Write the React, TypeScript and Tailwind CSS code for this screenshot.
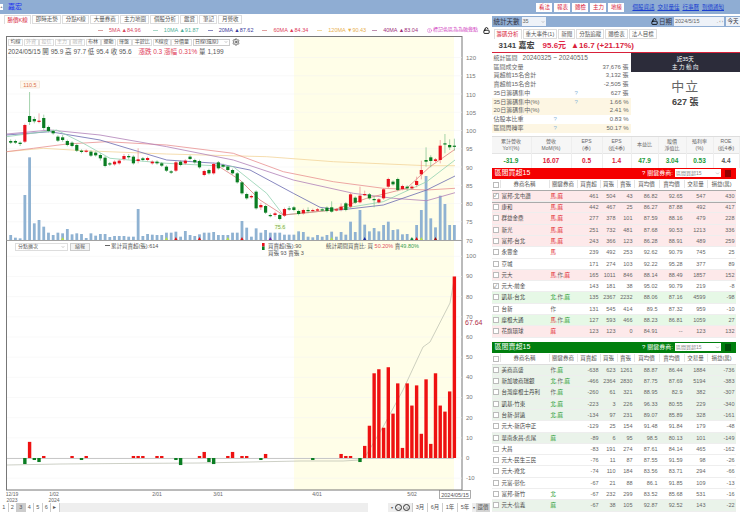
import { ChevronDown, Info, LockOpen, Minus, Plus, Settings } from "lucide-react";

const leftTabs = ["勝價K線", "即時走勢", "分點K線", "大量券商", "主力地圖", "個股分析", "鑑賞", "筆記", "月營收"];
const rightTabs = ["籌碼分析", "重大事件(1)", "新聞", "分點追蹤", "體檢表", "法人目標"];
const topButtons = ["看法", "報表", "體檢", "主力", "地緣"];
const topLinks = ["個股資訊", "交易量佳", "行事曆", "到價通知"];

const legend = [
	{ label: "5MA ▲84.96", text: "text-[#d9485f]", line: "bg-[#d9a0a0]" },
	{ label: "10MA ▲91.87", text: "text-[#4fb09a]", line: "bg-[#a8d8c8]" },
	{ label: "20MA ▲87.62", text: "text-[#3c3c9c]", line: "bg-[#8888c0]" },
	{ label: "60MA ▲84.34", text: "text-[#e0405a]", line: "bg-[#e0a0a0]" },
	{ label: "120MA ▼90.43", text: "text-[#e8b050]", line: "bg-[#f0d8a0]" },
	{ label: "40MA ▲83.04", text: "text-[#a0307a]", line: "bg-[#c090b0]" },
];

// top, bottom, colour, optional wick top/bottom (units: 3x crop of y=130)
type Candle = [number, number, "r" | "g", number?, number?];
const candles: Candle[] = [
	[33, 38, "g", 28, 42], [33, 38, "g"], [38, 42, "g", 34, 48], [-15, 35, "r"], [-42, -24, "g", -114, -15],
	[-33, -26, "g", -40, -20], [-28, -24, "r", -50, -20], [-36, -6, "g", -46, 0], [-9, 3, "g"], [3, 10, "g"],
	[20, 32, "g"], [22, 30, "g", 15, 35], [33, 45, "g"], [38, 48, "g"], [45, 62, "g"], [62, 66, "g"], [62, 64, "r"], [65, 77, "g"], [68, 76, "g"], [75, 85, "g", 70, 92],
	[83, 108, "g", 78, 112], [100, 103, "g", 96, 108], [95, 103, "r"], [92, 100, "r"], [78, 87, "r", 72, 92], [78, 82, "g", 72, 88], [80, 100, "g"], [88, 93, "r", 55, 100], [85, 90, "g"], [84, 90, "r"],
	[95, 100, "r"], [95, 100, "g"], [100, 107, "g"], [110, 122, "g"], [124, 128, "g"], [97, 122, "r"], [95, 105, "g"], [92, 100, "r"], [80, 87, "g"], [90, 97, "g"],
	[93, 112, "g"], [123, 135, "r"], [120, 130, "g"], [102, 130, "r"], [97, 115, "g"], [105, 110, "g"], [110, 120, "g"], [120, 130, "g"], [130, 157, "g"], [157, 190, "g"],
	[192, 205, "g"], [198, 202, "r"], [185, 235, "g"], [225, 232, "r", 218, 240], [228, 248, "g"], [255, 258, "g", 250, 262], [250, 255, "r", 245, 260], [255, 267, "g"], [237, 257, "r"], [235, 237, "g", 228, 242],
	[232, 240, "g"], [243, 252, "g"], [240, 250, "r"], [240, 243, "g", 232, 250], [240, 243, "r"], [238, 242, "r"], [238, 240, "g"], [233, 243, "g"], [232, 245, "g", 214, 248], [238, 240, "r"],
	[230, 240, "r", 220, 244], [220, 240, "g"], [193, 230, "r"], [203, 218, "g"], [197, 217, "r", 170, 220], [192, 195, "r", 182, 198], [193, 205, "g"], [207, 210, "g", 198, 232], [208, 217, "r"], [178, 205, "r"],
	[147, 170, "r"], [155, 163, "g"], [147, 180, "g"], [168, 177, "r"], [170, 175, "g", 166, 182], [170, 175, "r"], [153, 165, "r", 140, 172], [120, 133, "r", 92, 148], [90, 95, "g", 52, 110], [82, 93, "g", 76, 112],
	[88, 93, "r"], [47, 90, "r", 30, 100], [40, 43, "g", 12, 70], [45, 52, "g", 28, 60], [47, 50, "g", 26, 62],
];

const volumes = [
	15, 7, 5, 135, 248, 50, 60, 40, 22, 15, 22, 20, 33, 17, 20, 18, 6, 20, 13, 18, 18, 9, 12, 12, 12, 10, 10, 93, 12, 18, 16, 15, 15, 22, 22, 25, 10, 27, 15, 12,
	17, 22, 22, 24, 15, 15, 15, 22, 22, 57, 37, 10, 35, 22, 30, 22, 22, 22, 16, 16, 16, 26, 24, 10, 8, 15, 10, 15, 25, 10, 24, 16, 55, 24, 90, 46, 26, 36, 26, 45,
	55, 30, 32, 17, 18, 5, 45, 90, 192, 65, 38, 133, 108, 45, 45,
];

const volMarks: [number, string][] = [
	[11, "#b8e04a"], [33, "#b8e04a"], [35, "#e01010"], [40, "#e01010"], [46, "#b8e04a"], [49, "#e01010"], [55, "#6a1fa0"], [68, "#b8e04a"], [75, "#1a2fa0"], [85, "#0a8a3a"], [86, "#e01010"], [87, "#b8e04a"], [90, "#a01010"],
];

const netBars: Record<number, number> = {
	3: -3, 4: 8, 5: -1, 6: -2, 7: 1, 13: 1, 15: -1, 16: 1, 26: 1, 27: 1, 28: 1, 31: 1, 32: 1, 35: -1, 36: -3.5, 40: 1, 41: 3, 42: -2, 43: -3, 46: 1, 47: 3, 49: 1, 50: 1, 53: -1, 54: 2, 64: -1, 70: 2, 71: 1, 72: 1, 74: -2,
	75: 6, 76: 16, 77: 42, 78: 44, 79: 15, 80: 45, 81: 22, 82: 37, 83: 5, 84: 37, 85: 26, 86: 36, 87: 12, 88: 39, 89: 7, 90: 42, 91: 26, 92: 23, 93: 33, 94: 90,
};

const maLines = [
	{ color: "#f3d49a", pts: "20,65 130,55 250,62 500,72 800,80 1000,95 1280,107 1365,107" },
	{ color: "#e89090", pts: "20,65 100,55 200,42 320,35 500,45 700,70 850,125 1000,155 1150,175 1280,180 1365,175" },
	{ color: "#b080b8", pts: "20,12 150,0 300,15 500,50 700,90 880,150 1060,190 1180,205 1280,212 1365,188" },
	{ color: "#6a6ab0", pts: "20,15 150,5 300,30 500,90 650,100 750,120 880,190 960,232 1020,240 1150,225 1280,180 1365,138" },
	{ color: "#90d0b0", pts: "20,20 170,0 250,40 330,85 500,100 700,110 800,190 850,255 1000,240 1150,215 1280,155 1365,90" },
	{ color: "#e08080", pts: "650,105 720,150 780,210 850,255 1000,240 1100,205 1220,175 1290,110 1365,58" },
];

const xAt = (i: number) => 10.7 + 4.72 * i;
const zy = (z: number) => 130 + z / 3;
const linePts = (pts: string) =>
	pts
		.split(" ")
		.map((p) => {
			const [x, y] = p.split(",").map(Number);
			return `${(x / 3).toFixed(1)},${zy(y).toFixed(1)}`;
		})
		.join(" ");
const netY = (v: number) => 458 - v * 2.017;

const stats = [
	{ name: "統計區間", span: "20240325 ~ 20240515" },
	{ name: "區間成交量", value: "37,676 張" },
	{ name: "買超前15名合計", value: "3,132 張" },
	{ name: "賣超前15名合計", value: "-2,505 張" },
	{ name: "35日籌碼集中", value: "627 張", q: "w-[81px]" },
	{ name: "35日籌碼集中(%)", value: "1.66 %", q: "w-[81px]", hi: true },
	{ name: "20日籌碼集中(%)", value: "2.41 %", hi: true },
	{ name: "佔股本比重", value: "0.83 %", q: "w-[60px]" },
	{ name: "區間周轉率", value: "50.17 %", q: "w-[60px]", hi: true },
];

const metrics = [
	{ head: ["累計營收", "YoY(%)"], value: "-31.9", color: "text-[#1a9a3a]", w: "w-[40px]" },
	{ head: ["營收", "MoM(%)"], value: "16.07", color: "text-[#d8213a]", w: "w-[40px]" },
	{ head: ["EPS", "(季)"], value: "0.5", color: "text-[#d8213a]", w: "w-[31px]" },
	{ head: ["EPS", "(近4季)"], value: "1.4", color: "text-[#d8213a]", w: "w-[29px]" },
	{ head: ["本益比"], value: "47.9", color: "text-[#1a9a3a]", w: "w-[27px]" },
	{ head: ["股價", "淨值比"], value: "3.04", color: "text-[#1a9a3a]", w: "w-[28px]" },
	{ head: ["殖利率", "(%)"], value: "0.53", color: "text-[#1a9a3a]", w: "w-[27px]" },
	{ head: ["ROE", "(近4季)"], value: "4.4", color: "text-[#555]", w: "w-[26px]" },
];

const headers = ["券商名稱", "關鍵券商", "買賣超", "買張", "賣張", "買均價", "賣均價", "交易量", "損益(萬)"];

type Row = { tint: string; tag: string; tagColor: string; cells: (string | number)[]; checked?: boolean; focus?: boolean };

const pink = "bg-[#fde9ea]";
const mint = "bg-[#e6f8e6]";
const sage = "bg-[#eaf3ea]";
const plain = "bg-white";
const red = "text-[#e01a1a]";
const green = "text-[#1a9a2a]";

const buyRows: Row[] = [
	{ tint: pink, tag: "馬,麻", tagColor: red, checked: true, focus: true, cells: ["富邦-北屯讚", 461, 504, 43, 86.82, 92.65, 547, 430] },
	{ tint: pink, tag: "馬,麻", tagColor: red, cells: ["康和", 442, 467, 25, 86.27, 87.88, 492, 417] },
	{ tint: pink, tag: "馬,麻", tagColor: red, cells: ["群益金鼎", 277, 378, 101, 87.59, 88.16, 479, 228] },
	{ tint: pink, tag: "馬,麻", tagColor: red, cells: ["新光", 251, 732, 481, 87.68, 90.53, 1213, 336] },
	{ tint: pink, tag: "馬,麻", tagColor: red, cells: ["富邦-台北", 243, 366, 123, 86.28, 88.91, 489, 259] },
	{ tint: plain, tag: "馬", tagColor: red, cells: ["永豐金", 239, 492, 253, 92.62, 90.79, 745, 25] },
	{ tint: plain, tag: "", tagColor: red, cells: ["京城", 171, 274, 103, 92.22, 95.28, 377, 89] },
	{ tint: pink, tag: "馬,作,麻", tagColor: red, cells: ["元大", 165, 1011, 846, 88.14, 88.49, 1857, 152] },
	{ tint: plain, tag: "", tagColor: red, checked: true, cells: ["元大-前金", 143, 181, 38, 95.02, 90.79, 219, -8] },
	{ tint: mint, tag: "北,作,麻", tagColor: green, cells: ["凱基-台北", 135, 2367, 2232, 88.06, 87.16, 4599, -98] },
	{ tint: plain, tag: "作", tagColor: green, cells: ["台新", 131, 545, 414, 89.5, 87.32, 959, -10] },
	{ tint: mint, tag: "馬,作,麻", tagColor: green, cells: ["摩根大通", 127, 593, 466, 88.23, 86.81, 1059, 27] },
	{ tint: pink, tag: "麻", tagColor: red, cells: ["花旗環球", 123, 123, 0, 84.91, "--", 123, 132] },
];

const sellRows: Row[] = [
	{ tint: sage, tag: "作,麻", tagColor: green, cells: ["美商高盛", -638, 623, 1261, 88.87, 86.44, 1884, -736] },
	{ tint: sage, tag: "北,作,麻", tagColor: green, cells: ["新加坡商瑞銀", -466, 2364, 2830, 87.75, 87.69, 5194, -383] },
	{ tint: sage, tag: "作,麻", tagColor: green, cells: ["台灣摩根士丹利", -260, 61, 321, 88.95, 82.9, 382, -307] },
	{ tint: sage, tag: "北,麻", tagColor: green, cells: ["凱基-竹東", -223, 3, 226, 96.33, 80.55, 229, -340] },
	{ tint: sage, tag: "北,麻", tagColor: green, cells: ["台新-屏遠", -134, 97, 231, 89.07, 85.89, 328, -161] },
	{ tint: plain, tag: "", tagColor: green, cells: ["元大-新店中正", -129, 25, 154, 91.48, 91.84, 179, -48] },
	{ tint: sage, tag: "麻", tagColor: green, cells: ["華南永昌-虎尾", -89, 6, 95, 98.5, 80.13, 101, -149] },
	{ tint: plain, tag: "", tagColor: green, cells: ["大昌", -83, 191, 274, 87.61, 84.14, 465, -162] },
	{ tint: plain, tag: "", tagColor: green, cells: ["元大-民生三民", -76, 11, 87, 87.55, 91.59, 98, -26] },
	{ tint: plain, tag: "", tagColor: green, cells: ["元大-遼北", -74, 110, 184, 83.56, 83.71, 294, -66] },
	{ tint: plain, tag: "", tagColor: green, cells: ["元富-彰化", -67, 21, 88, 86.1, 91.85, 109, -13] },
	{ tint: plain, tag: "北", tagColor: green, cells: ["富邦-新竹", -67, 232, 299, 83.52, 85.68, 531, -16] },
	{ tint: sage, tag: "麻", tagColor: green, cells: ["元大-信義", -67, 38, 105, 92.87, 92.52, 143, -22] },
];

const gridCols = "grid grid-cols-[8px_49px_28px_23px_17px_17px_25px_25px_23px_29px]";

// 馬 is always red, 北 green, 作 neutral; 麻 follows the row
const tagClass = (part: string, rowColor: string) => {
	if (part === "馬") return red;
	if (part === "北") return green;
	if (part === "作") return "text-[#666]";
	return rowColor;
};

const Checkbox = ({ checked }: { checked?: boolean }) => (
	<span className="mt-[2px] ml-[1px] flex h-[6px] w-[6px] items-center justify-center border border-[#bbb] bg-white text-[5px] leading-none text-[#666]">
		{checked ? "✓" : ""}
	</span>
);

const BrokerTable = ({ title, head, rows }: { title: string; head: string; rows: Row[] }) => (
	<div>
		<div className={`flex h-[11px] items-center ${head} pr-[5px] pl-[3px] text-[7px] text-white`}>
			<span className="flex-1">{title}</span>
			<span className="mr-[2px] text-[6px]">?</span>
			<span className="mr-[2px] text-[6px]">關鍵券商:</span>
			<span className="mr-[4px] flex h-[8px] w-[46px] items-center justify-between bg-white px-[1px] text-[5px] text-[#888]">
				區間買超15
				<ChevronDown className="h-[5px] w-[5px]" />
			</span>
			<span className="h-[7px] w-[6px] bg-black/40" />
		</div>
		<div className={`${gridCols} h-[12px] items-center border-b border-[#ddd] bg-white text-center text-[5.5px] text-[#555]`}>
			<Checkbox />
			{headers.map((h) => (
				<span key={h} className="truncate border-l border-[#e4e4e4]">
					{h}
				</span>
			))}
		</div>
		{rows.map((row) => (
			<div
				key={String(row.cells[0])}
				className={`${gridCols} h-[11.3px] ${row.tint} border-b border-[#eee] text-[5.5px] leading-[10.5px] text-[#666] ${row.focus ? "outline outline-[#aaa]" : ""}`}
			>
				<Checkbox checked={row.checked} />
				<span className="truncate pl-[2px] text-[#444]">{row.cells[0]}</span>
				<span className="pl-[2px]">
					{row.tag
						? row.tag.split(",").map((part, i) => (
								<span key={part} className={tagClass(part, row.tagColor)}>
									{i > 0 ? "," : ""}
									{part}
								</span>
							))
						: null}
				</span>
				{row.cells.slice(1).map((c, i) => (
					<span key={i} className="pr-[1px] text-right">
						{c}
					</span>
				))}
			</div>
		))}
	</div>
);

const ChartSvg = () => {
	const yTicks = [120, 115, 110, 105, 100, 95, 90, 85, 80, 75, 70];
	const lowerTicks = [100, 90, 80, 70, 60, 50, 40, 30, 20, 10, 0, -10];
	return (
		<svg width="484" height="467" viewBox="6 36 484 467" className="block" fontFamily="'Liberation Sans','Noto Sans CJK TC',sans-serif">
			<rect x="294" y="37" width="160" height="453" fill="#fffee8" />
			<rect x="6.5" y="36.5" width="455.5" height="453.5" fill="none" stroke="#777" />
			<line x1="6" y1="240.5" x2="462" y2="240.5" stroke="#888" />

			{yTicks.map((t, i) => (
				<g key={t}>
					<line x1="7" x2="462" y1={57.5 + i * 18.25} y2={57.5 + i * 18.25} stroke="#f3f3f3" strokeWidth="0.5" />
					<text x="466" y={60 + i * 18.25} fontSize="6" fill="#777">{t}</text>
				</g>
			))}
			{lowerTicks.map((t) => (
				<g key={t}>
					<line x1="7" x2="462" y1={netY(t)} y2={netY(t)} stroke="#f3f3f3" strokeWidth="0.5" />
					<text x="466" y={netY(t) + 2} fontSize="6" fill="#777">{t}</text>
				</g>
			))}

			{/* volume */}
			{volumes.map((h, i) => (
				<rect key={i} x={xAt(i) - 1.4} y={240 - h / 3} width="2.8" height={h / 3} fill="#8fb2d2" />
			))}
			{volMarks.map(([i, c]) => (
				<path key={i} d={`M${xAt(i) - 1.6} 240 L${xAt(i)} 237 L${xAt(i) + 1.6} 240 Z`} fill={c} />
			))}

			{/* moving averages */}
			{maLines.map((l) => (
				<polyline key={l.color} points={linePts(l.pts)} fill="none" stroke={l.color} strokeWidth="0.8" />
			))}

			{/* candles */}
			{candles.map(([t, b, c, wt, wb], i) => {
				const fill = c === "r" ? "#e8101c" : "#0a7d22";
				const stem = c === "r" ? "#e88a90" : "#7cc08a";
				return (
					<g key={i}>
						<line x1={xAt(i)} x2={xAt(i)} y1={zy(wt ?? t - 4)} y2={zy(wb ?? b + 4)} stroke={stem} strokeWidth="0.7" />
						<rect x={xAt(i) - 1.6} y={zy(t)} width="3.2" height={Math.max((b - t) / 3, 1.2)} fill={fill} />
					</g>
				);
			})}

			<rect x="20.5" y="81" width="19" height="7" fill="#fff8ee" stroke="#eadcc8" strokeWidth="0.5" />
			<text x="30" y="87" fontSize="5.5" fill="#d9704a" textAnchor="middle">110.5</text>
			<rect x="274.5" y="223" width="11" height="7" fill="#f8fff0" />
			<text x="280" y="229" fontSize="5.5" fill="#79a83a" textAnchor="middle">75.6</text>

			{/* lower panel legend */}
			<line x1="105" x2="110" y1="245.5" y2="245.5" stroke="#666" />
			<text x="111" y="248" fontSize="5.5" fill="#555">累計買賣超(張):614</text>
			<rect x="262" y="243" width="2.6" height="3.5" fill="#e8101c" />
			<rect x="262" y="246.5" width="2.6" height="3.5" fill="#0a7d22" />
			<text x="268" y="248" fontSize="5.5" fill="#555">買賣超(張):90</text>
			<text x="268" y="255" fontSize="5.5" fill="#555">買張 93 賣張 3</text>
			<text x="326" y="248" fontSize="5.5" fill="#555">
				統計期間買賣比: 買 <tspan fill="#e05060">50.20%</tspan> 賣<tspan fill="#3aa050">49.80%</tspan>
			</text>

			{/* net buy bars and cumulative line */}
			<line x1="7" x2="454" y1="458.5" y2="458.5" stroke="#c8c8c8" />
			<polyline
				points="7,465 60,464 120,463.5 200,463 300,461 343,461 360,460 365,457 383,427 403,390 423,347 430,342 450,303 454,280"
				fill="none"
				stroke="#b8bcae"
				strokeWidth="0.7"
			/>
			{Object.entries(netBars).map(([k, v]) => {
				const x = xAt(Number(k));
				return v >= 0 ? (
					<rect key={k} x={x - 1.7} y={netY(v)} width="3.4" height={v * 2.017} fill="#ee1111" />
				) : (
					<rect key={k} x={x - 1.7} y="458" width="3.4" height={-v * 2.017} fill="#0a7d22" />
				);
			})}
			<text x="465" y="325" fontSize="7" fill="#b0304a">67.64</text>

			{/* x axis */}
			{[
				["12/19", 12],
				["1/02", 54],
				["2/01", 157],
				["3/01", 218],
				["4/01", 317],
				["5/02", 412],
			].map(([d, x]) => (
				<text key={d} x={x} y="496" fontSize="5" fill="#666" textAnchor="middle">{d}</text>
			))}
			<text x="12" y="502" fontSize="5" fill="#666" textAnchor="middle">2023</text>
			<text x="54" y="502" fontSize="5" fill="#666" textAnchor="middle">2024</text>
			<rect x="439.5" y="490.5" width="31" height="8" fill="#fff" stroke="#888" strokeWidth="0.7" />
			<text x="455" y="496.5" fontSize="5.5" fill="#555" textAnchor="middle">2024/05/15</text>
		</svg>
	);
};

export default function App() {
	return (
		<div className="flex h-[512px] w-[740px] flex-col overflow-hidden bg-white font-['Liberation_Sans','Noto_Sans_CJK_TC',sans-serif] text-[#555]">
			{/* Top bar */}
			<div className="flex h-[14px] shrink-0 items-center bg-[#8fadd3] text-[6px]">
				<span className="flex h-[6px] w-[3px] items-center justify-center bg-white text-[4px] text-black">+</span>
				<span className="ml-[5px] flex-1 text-[7px] text-[#1a2ff0]">嘉宏</span>
				<div className="mr-[8px] flex gap-[2px]">
					{topButtons.map((b) => (
						<span key={b} className="flex h-[9px] w-[16px] items-center justify-center bg-white text-[5.5px] text-[#d8213a]">
							{b}
						</span>
					))}
				</div>
				<div className="mr-[16px] flex gap-[3px]">
					{topLinks.map((l) => (
						<span key={l} className="text-[5.5px] text-[#1a3fd0] underline">
							{l}
						</span>
					))}
				</div>
			</div>

			<div className="flex min-h-0 flex-1">
				{/* Left: charts */}
				<div className="flex w-[490px] shrink-0 flex-col">
					<div className="flex h-[10px] items-end gap-[1px] pt-[1px] pl-[4px] text-[5.5px]">
						{leftTabs.map((t, i) => (
							<span key={t} className={`flex h-[9px] items-center justify-center border border-[#ddd] px-[2.5px] ${i === 0 ? "border-b-0 text-[#d8213a]" : "text-[#555]"}`}>
								{t}
							</span>
						))}
					</div>
					<div className="flex h-[12px] items-center pl-[98px] text-[5.5px]">
						{legend.map((m) => (
							<span key={m.label} className="flex w-[55px] items-center gap-[6px]">
								<span className={`h-[0.7px] w-[5px] shrink-0 ${m.line}`} />
								<span className={`whitespace-nowrap ${m.text}`}>{m.label}</span>
							</span>
						))}
						<Info className="h-[5px] w-[5px] shrink-0 text-[#d040c0]" />
						<span className="ml-[1px] w-[49px] shrink-0 text-[5px] whitespace-nowrap text-[#d040c0]">標記色區為為融覺點</span>
						<LockOpen className="ml-[1px] h-[7px] w-[7px] shrink-0 text-black" strokeWidth={3} />
					</div>
					<div className="relative ml-[6px] h-[467px] w-[484px]">
						<ChartSvg />
						{/* toolbar over the chart */}
						<div className="absolute top-[2px] left-[2px] flex h-[8px] items-center gap-[0.5px] text-[5px]">
							{["均線", "外資", "投信", "主力", "融資", "布林", "擺動", "揮盤", "半餘比", "K線度", "分價量"].map((b, i) => (
								<span key={b} className={`flex h-[7px] items-center border border-[#ddd] px-[1.5px] ${i >= 1 && i <= 4 ? "text-[#bbb]" : "text-[#555]"}`}>
									{b}
								</span>
							))}
							<span className="ml-[1px] flex h-[7px] w-[37px] items-center justify-between border border-[#ccc] px-[1px] text-[#555]">
								日線(還原)
								<ChevronDown className="h-[4px] w-[4px]" />
							</span>
							<Settings className="ml-[1px] h-[8px] w-[8px] text-[#333]" />
						</div>
						<div className="absolute top-[11px] left-[2px] text-[6.5px] whitespace-nowrap text-[#555]">
							2024/05/15 開 95.9 高 97.7 低 95.4 收 95.6 <span className="ml-[5px] text-[#e0405a]">漲跌 0.3 漲幅 0.31%</span> 量 1,199
						</div>
						<div className="absolute top-[207px] left-[9px] flex items-center gap-[2px] text-[5px]">
							<span className="flex h-[8px] w-[53px] items-center justify-between border border-[#ddd] bg-white px-[2px]">
								分點擴次
								<ChevronDown className="h-[4px] w-[4px]" />
							</span>
							<span className="flex h-[8px] w-[20px] items-center justify-center border border-[#ccc] bg-[#f4f4f4]">縮報</span>
						</div>
					</div>
					<div className="flex h-[9px] items-center justify-between bg-[#eee] text-[5.5px]">
						<div className="flex">
							{["1", "2", "3", "4", "5", "6", "▸"].map((p) => (
								<span key={p} className={`flex h-[9px] w-[8.5px] items-center justify-center border-r border-[#ccc] ${p === "3" ? "bg-[#ccc]" : "bg-white"}`}>
									{p}
								</span>
							))}
						</div>
						<div className="flex h-[9px] items-center">
							<span className="h-[9px] w-[20px] bg-white" />
							<span className="mr-[2px] ml-[3px] text-[4px]">▾</span>
							<span className="mr-[1px] flex h-[7px] w-[7px] items-center justify-center rounded-full border border-[#333]">
								<Minus className="h-[4px] w-[4px]" />
							</span>
							<span className="mr-[2px] flex h-[7px] w-[7px] items-center justify-center rounded-full border border-[#333]">
								<Plus className="h-[4px] w-[4px]" />
							</span>
							{["3月", "6月", "1年", "5年"].map((r) => (
								<span key={r} className="flex h-[9px] w-[15px] items-center justify-center border-l border-[#ccc] bg-white">
									{r}
								</span>
							))}
							<span className="w-[4px] text-center text-[4px]">▾</span>
							<span className="flex h-[9px] w-[14px] items-center justify-center bg-[#d4d4d4]">還價</span>
						</div>
					</div>
				</div>

				{/* Right: broker stats */}
				<div className="flex w-[250px] shrink-0 flex-col pl-[1.5px]">
					<div className="mt-[2px] flex h-[11px] items-center bg-[#8fadd3] text-[6.5px] text-[#334]">
						<span className="ml-[2px]">統計天數</span>
						<span className="ml-[2px] flex h-[9px] w-[24px] items-center justify-between bg-[#eef2f8] px-[1px] text-[5.5px] text-[#666]">
							35
							<ChevronDown className="h-[4px] w-[4px]" />
						</span>
						<LockOpen className="ml-auto h-[7px] w-[7px] text-black" strokeWidth={3} />
						<span className="ml-[1px]">日期</span>
						<span className="ml-[2px] flex h-[9px] w-[50px] items-center justify-between bg-[#eef2f8] px-[1px] text-[5.5px] text-[#666]">
							2024/5/15
							<span className="text-[4px]">- ‹ ›</span>
						</span>
						<span className="ml-[2px] w-[14px] bg-[#eef2f8] text-center text-[5.5px] leading-[9px]">今天</span>
					</div>
					<div className="mt-[1px] flex h-[12px] items-center gap-[1px] pl-[2px] text-[5.5px]">
						{rightTabs.map((t, i) => (
							<span key={t} className={`flex h-[10px] items-center border border-[#ddd] px-[2px] ${i === 0 ? "border-b-0 text-[#d8213a]" : "text-[#555]"}`}>
								{t}
							</span>
						))}
					</div>
					<div className="flex h-[13px] items-center border-b-[1px] border-[#d8213a] pl-[7px] text-[8px] font-bold whitespace-nowrap">
						<span className="text-[#444]">3141 嘉宏</span>
						<span className="ml-[8px] text-[#e02a4a]">95.6元</span>
						<span className="ml-[5px] text-[#d8213a]">▲16.7 (+21.17%)</span>
					</div>

					<div className="flex">
						<div className="w-[139px] pt-[1px] text-[6px] text-[#666]">
							{stats.map((s) => (
								<div key={s.name} className={`flex h-[8.75px] items-center pr-[2px] pl-[2px] ${s.hi ? "bg-[#fdf6e3]" : ""}`}>
									<span className={`whitespace-nowrap ${s.q ?? ""}`}>
										{s.name}
										{s.span ? <span className="ml-[5px] text-[6.5px]">{s.span}</span> : null}
									</span>
									{s.q ? <span className="text-[#8fb8d8]">?</span> : null}
									<span className="ml-auto">{s.value}</span>
								</div>
							))}
						</div>
						<div className="flex-1 text-center">
							<div className="flex h-[19px] flex-col justify-center bg-[#2c2c3a] text-[5.5px] leading-[8px] text-white">
								<span>近35天</span>
								<span>主 力 動 向</span>
							</div>
							<div className="mt-[7px] text-[13px] leading-[16px] tracking-[1px] text-[#666]">中立</div>
							<div className="mt-[1px] text-[9px] leading-[12px] font-bold text-[#444]">627 張</div>
						</div>
					</div>

					<div className="mt-[3px] flex border-t border-[#ddd]">
						{metrics.map((m) => (
							<div key={m.value} className={`${m.w} shrink-0 border-r border-[#eee] text-center`}>
								<div className="flex h-[17px] flex-col justify-center border-b border-[#e4e4e4] bg-[#f6f6f6] text-[5px] leading-[7px] text-[#666]">
									{m.head.map((h) => (
										<span key={h}>{h}</span>
									))}
								</div>
								<div className={`h-[14px] text-[6.5px] leading-[13px] font-bold ${m.color}`}>{m.value}</div>
							</div>
						))}
					</div>

					<div className="pr-[4px]">
						<div className="h-[174px] overflow-hidden">
							<BrokerTable title="區間買超15" head="bg-[#f40000]" rows={buyRows} />
						</div>
						<BrokerTable title="區間賣超15" head="bg-[#007f0e]" rows={sellRows} />
					</div>
				</div>
			</div>
		</div>
	);
}
